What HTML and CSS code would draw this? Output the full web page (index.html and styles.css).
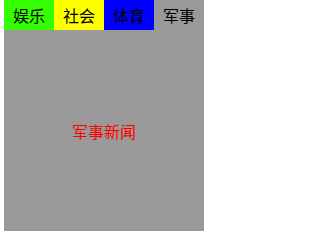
FILE: index.html
```html
<!DOCTYPE html>
<html>
<head>
<meta charset="utf-8">
<link rel="stylesheet" href="styles.css">
</head>
<body>
<div class="box">
  <ul class="tabs">
    <li class="tab green">娱乐</li>
    <li class="tab yellow">社会</li>
    <li class="tab blue">体育</li>
    <li class="tab gray">军事</li>
  </ul>
  <div class="content">军事新闻</div>
</div>
</body>
</html>
```
FILE: styles.css
```css
html, body {
  margin: 0;
  padding: 0;
  background: #fff;
}
body {
  padding: 0 4px;
  font-family: "Noto Sans CJK SC", "Liberation Sans", sans-serif;
}
.box {
  width: 200px;
  height: 231px;
  background: #999999;
  display: flex;
  flex-direction: column;
}
.tabs {
  list-style: none;
  margin: 0;
  padding: 0;
  display: flex;
  height: 30px;
}
.tab {
  width: 50px;
  height: 30px;
  display: flex;
  align-items: center;
  justify-content: center;
  font-size: 16px;
  color: #000;
}
.green { background: #33ff00; }
.yellow { background: #ffff00; }
.blue { background: #0000ff; }
.gray { background: #999999; }
.content {
  flex: 1;
  display: flex;
  align-items: center;
  justify-content: center;
  color: #ff0000;
  font-size: 16px;
}
```
